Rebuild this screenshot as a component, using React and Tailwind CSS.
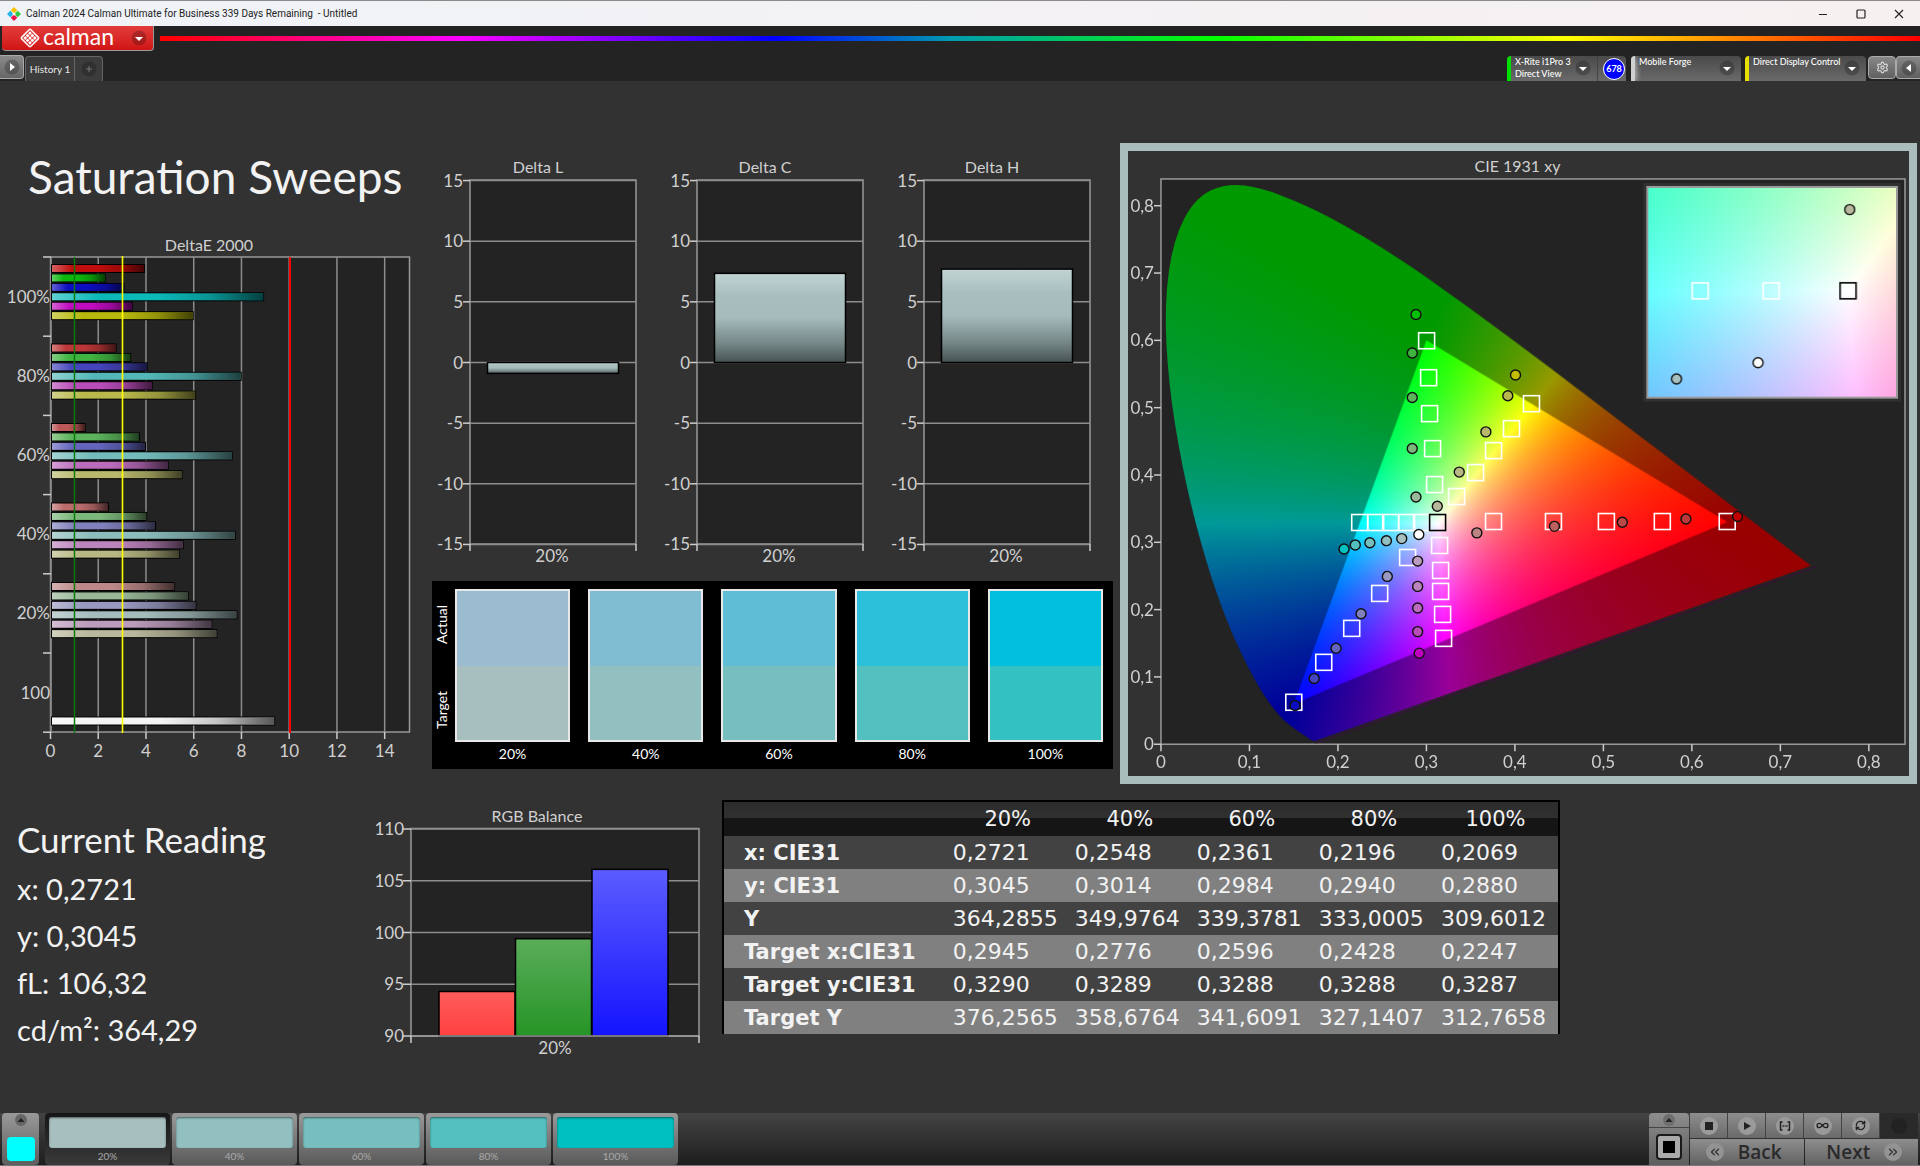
import { useEffect, useRef } from 'react'
import { ChevronsLeft, ChevronsRight, Infinity as InfinityIcon, RefreshCw, Settings } from 'lucide-react'

const levels = ['20%', '40%', '60%', '80%', '100%']

const deltaE = [
  { label: '100%', values: [3.96, 2.31, 3.1, 8.95, 3.44, 6.0], colors: ['#c00c0c', '#0cb80c', '#0c0cc0', '#0cb8b8', '#c00cc0', '#b8b80c'] },
  { label: '80%', values: [2.77, 3.38, 4.07, 8.01, 4.28, 6.1], colors: ['#bc3838', '#40b440', '#4444bc', '#54b8b8', '#b84cb8', '#b8b84c'] },
  { label: '60%', values: [1.47, 3.75, 4.0, 7.63, 4.95, 5.53], colors: ['#bc5858', '#5cb45c', '#6464bc', '#74bcbc', '#bc6cbc', '#b8b86c'] },
  { label: '40%', values: [2.45, 4.05, 4.42, 7.76, 5.58, 5.41], colors: ['#bc6c6c', '#7cb87c', '#8080bc', '#8cbcbc', '#bc84bc', '#b8b884'] },
  { label: '20%', values: [5.2, 5.79, 6.11, 7.83, 6.78, 6.99], colors: ['#bc8888', '#98b898', '#9898c0', '#a4bcbc', '#bc9cbc', '#b8b89c'] },
]

const swatches = [
  { actual: '#9abbd0', target: '#a8bfbf', chip: '#a8bfbf' },
  { actual: '#80bdd3', target: '#92bfbf', chip: '#92bfbf' },
  { actual: '#5fbed6', target: '#77bfbf', chip: '#77bfbf' },
  { actual: '#2cc0da', target: '#54bfbf', chip: '#54bfbf' },
  { actual: '#00c0dd', target: '#33c1c1', chip: '#00c0c0' },
]

const tableRows = [
  ['x: CIE31', '0,2721', '0,2548', '0,2361', '0,2196', '0,2069'],
  ['y: CIE31', '0,3045', '0,3014', '0,2984', '0,2940', '0,2880'],
  ['Y', '364,2855', '349,9764', '339,3781', '333,0005', '309,6012'],
  ['Target x:CIE31', '0,2945', '0,2776', '0,2596', '0,2428', '0,2247'],
  ['Target y:CIE31', '0,3290', '0,3289', '0,3288', '0,3288', '0,3287'],
  ['Target Y', '376,2565', '358,6764', '341,6091', '327,1407', '312,7658'],
]

const locus = [
  [0.1741, 0.005], [0.1714, 0.0051], [0.1689, 0.0069], [0.1644, 0.0109], [0.1566, 0.0177], [0.144, 0.0297],
  [0.1355, 0.0399], [0.1241, 0.0578], [0.1096, 0.0868], [0.0913, 0.1327], [0.0687, 0.2007], [0.0454, 0.295],
  [0.0235, 0.4127], [0.0082, 0.5384], [0.0039, 0.6548], [0.0139, 0.7502], [0.0389, 0.812], [0.0743, 0.8338],
  [0.1142, 0.8262], [0.1547, 0.8059], [0.1929, 0.7816], [0.2296, 0.7543], [0.2658, 0.7243], [0.3016, 0.6923],
  [0.3373, 0.6589], [0.3731, 0.6245], [0.4087, 0.5896], [0.4441, 0.5547], [0.4788, 0.5202], [0.5125, 0.4866],
  [0.5448, 0.4544], [0.5752, 0.4242], [0.627, 0.3725], [0.6658, 0.334], [0.6915, 0.3083], [0.719, 0.2809],
  [0.7347, 0.2653],
]

const gamut = [[0.64, 0.33], [0.3, 0.6], [0.15, 0.06]]

const targets = [
  [0.3, 0.6], [0.3025, 0.5442], [0.304, 0.4905], [0.3074, 0.4388], [0.3093, 0.3851],
  [0.4187, 0.5066], [0.3958, 0.469], [0.3762, 0.4369], [0.3552, 0.4036], [0.3337, 0.3673],
  [0.64, 0.331], [0.5666, 0.331], [0.5034, 0.331], [0.4436, 0.331], [0.3762, 0.331],
  [0.2247, 0.3297], [0.2428, 0.3297], [0.2596, 0.3297], [0.2776, 0.3297], [0.2945, 0.3297],
  [0.15, 0.0625], [0.1836, 0.1217], [0.2156, 0.1723], [0.2476, 0.224], [0.2792, 0.277],
  [0.3198, 0.1568], [0.3179, 0.1932], [0.316, 0.2277], [0.316, 0.2586], [0.3145, 0.2955],
]

const readings = [
  [0.2882, 0.6385, '#00c000'], [0.284, 0.5812, '#40b440'], [0.284, 0.5152, '#5cb45c'], [0.284, 0.4394, '#7cb87c'], [0.2882, 0.3673, '#98b898'],
  [0.4007, 0.5485, '#c0c000'], [0.392, 0.5177, '#b8b84c'], [0.3672, 0.464, '#b8b86c'], [0.3371, 0.4043, '#b8b884'], [0.3123, 0.3536, '#b8b89c'],
  [0.6516, 0.3383, '#c00000'], [0.5933, 0.3346, '#bc3838'], [0.5214, 0.3297, '#bc4848'], [0.4447, 0.3237, '#bc6060'], [0.357, 0.314, '#bc8484'],
  [0.2069, 0.29, '#00c0c0'], [0.2196, 0.296, '#54bfbf'], [0.2361, 0.2994, '#77bfbf'], [0.2548, 0.3024, '#92bfbf'], [0.2721, 0.3055, '#a8bfbf'],
  [0.1516, 0.0576, '#0c0cc0'], [0.1731, 0.0977, '#4444bc'], [0.1979, 0.1427, '#6464bc'], [0.2261, 0.1938, '#8080bc'], [0.2558, 0.2493, '#9898c0'],
  [0.2919, 0.1353, '#c000c0'], [0.2901, 0.1673, '#b84cb8'], [0.2901, 0.2024, '#bc6cbc'], [0.2901, 0.2345, '#bc84bc'], [0.2901, 0.2721, '#bc9cbc'],
  [0.2914, 0.3115, '#ffffff'],
]

// chromaticity -> brightest displayable colour, linear light
function xyToRgb(x, y) {
  const X = x / y
  const Z = (1 - x - y) / y
  const lin = [
    3.2406 * X - 1.5372 - 0.4986 * Z,
    -0.9689 * X + 1.8758 + 0.0415 * Z,
    0.0557 * X - 0.204 + 1.057 * Z,
  ].map((v) => Math.max(0, v))
  const max = Math.max(...lin)
  return lin.map((v) => (255 * v) / max)
}

function makeField(w, h, toXy, gain) {
  const off = document.createElement('canvas')
  off.width = w
  off.height = h
  const ctx = off.getContext('2d')
  const img = ctx.createImageData(w, h)
  for (let j = 0; j < h; j++) {
    for (let i = 0; i < w; i++) {
      const [x, y] = toXy(i, j)
      const rgb = xyToRgb(x, Math.max(y, 0.0005))
      const p = (j * w + i) * 4
      img.data[p] = rgb[0] * gain
      img.data[p + 1] = rgb[1] * gain
      img.data[p + 2] = rgb[2] * gain
      img.data[p + 3] = 255
    }
  }
  ctx.putImageData(img, 0, 0)
  return off
}

const PLOT_W = 745
const PLOT_H = 566
const px = (x) => 886 * x
const py = (y) => PLOT_H - 674 * y

function GamutField() {
  const ref = useRef(null)

  useEffect(() => {
    const ctx = ref.current.getContext('2d')
    const toXy = (i, j) => [i / 886, (PLOT_H - j) / 674]
    ctx.clearRect(0, 0, PLOT_W, PLOT_H)

    ctx.save()
    ctx.beginPath()
    ctx.moveTo(px(locus[0][0]), py(locus[0][1]))
    for (let i = 1; i < locus.length - 1; i++) {
      const [ax, ay] = locus[i]
      const [bx, by] = locus[i + 1]
      ctx.quadraticCurveTo(px(ax), py(ay), px((ax + bx) / 2), py((ay + by) / 2))
    }
    ctx.lineTo(px(0.7347), py(0.2653))
    ctx.closePath()
    ctx.clip()
    ctx.drawImage(makeField(PLOT_W, PLOT_H, toXy, 0.6), 0, 0)
    ctx.restore()

    ctx.save()
    ctx.beginPath()
    gamut.forEach(([x, y]) => ctx.lineTo(px(x), py(y)))
    ctx.closePath()
    ctx.clip()
    ctx.drawImage(makeField(PLOT_W, PLOT_H, toXy, 1), 0, 0)
    ctx.restore()
  }, [])

  return <canvas ref={ref} width={PLOT_W} height={PLOT_H} className="block h-full w-full" />
}

const insetX = (x) => 200 + (x - 0.3127) * 4230
const insetY = (y) => 103 - (y - 0.329) * 3600

function InsetField() {
  const ref = useRef(null)

  useEffect(() => {
    const toXy = (i, j) => [0.3127 + (i - 200) / 4230, 0.329 + (103 - j) / 3600]
    ref.current.getContext('2d').drawImage(makeField(248, 209, toXy, 1), 0, 0)
  }, [])

  return <canvas ref={ref} width={248} height={209} className="block h-full w-full" />
}

function Marker({ x, y, black }) {
  return (
    <rect x={Math.round(x) - 8} y={Math.round(y) - 8} width="16" height="16" fill="none" stroke={black ? '#000' : '#fff'} strokeWidth="1.6" />
  )
}

function Dot({ x, y, fill }) {
  return <circle cx={x} cy={y} r="5" fill={fill} stroke="#111" strokeWidth="1.4" />
}

function CieChart() {
  const ticks = [0, 1, 2, 3, 4, 5, 6, 7, 8]
  const tickLabel = (t) => (t === 0 ? '0' : `0,${t}`)

  return (
    <svg viewBox="0 0 782 626" className="block h-auto w-full font-[Lato,sans-serif]" role="img" aria-label="CIE 1931 xy">
      <text x="390" y="21" textAnchor="middle" fontSize="16" fill="#d0d0d0">CIE 1931 xy</text>
      <rect x="33" y="28" width="745" height="566" fill="#232323" stroke="#999" strokeWidth="1.5" />
      <foreignObject x="33" y="28" width={PLOT_W} height={PLOT_H}>
        <GamutField />
      </foreignObject>
      <path d="M188 593 L690 416" stroke="#3c0f3c" strokeWidth="1" fill="none" />
      {ticks.map((t) => (
        <g key={t} fill="#d0d0d0" fontSize="17">
          <path d={`M${33 + 88.6 * t} 594v7`} stroke="#ccc" strokeWidth="1.5" />
          <text x={33 + 88.6 * t} y="618" textAnchor="middle">{tickLabel(t)}</text>
          <path d={`M33 ${594 - 67.4 * t}h-7`} stroke="#ccc" strokeWidth="1.5" />
          <text x="26" y={600 - 67.4 * t} textAnchor="end">{tickLabel(t)}</text>
        </g>
      ))}
      <g transform="translate(33 28)">
        {targets.map(([x, y]) => <Marker key={`${x}-${y}`} x={px(x)} y={py(y)} />)}
        <Marker x={px(0.3127)} y={py(0.33)} black />
        {readings.map(([x, y, fill]) => <Dot key={`${x}-${y}`} x={px(x)} y={py(y)} fill={fill} />)}
      </g>
      <rect x="516" y="32" width="258" height="219" fill="#303030" />
      <rect x="519" y="35" width="252" height="213" fill="#999" />
      <foreignObject x="521" y="37" width="248" height="209">
        <InsetField />
      </foreignObject>
      <g transform="translate(521 37)">
        <Marker x={insetX(0.2776)} y={insetY(0.329)} />
        <Marker x={insetX(0.2945)} y={insetY(0.329)} />
        <Marker x={insetX(0.3127)} y={insetY(0.329)} black />
        <Dot x={insetX(0.3131)} y={insetY(0.3516)} fill="#b8b89c" />
        <Dot x={insetX(0.2914)} y={insetY(0.309)} fill="#fff" />
        <Dot x={insetX(0.2721)} y={insetY(0.3045)} fill="#a8bfbf" />
      </g>
    </svg>
  )
}

function DeltaEChart() {
  const x = (v) => 50.5 + v * 23.87
  const bars = deltaE.flatMap((group, g) =>
    group.values.map((value, i) => ({ value, color: group.colors[i], y: 35 + g * 79.5 + i * 9.43 })),
  )
  bars.push({ value: 9.41, color: '#f4f4f4', y: 487.5 })

  return (
    <svg viewBox="0 0 430 540" className="block h-auto w-full font-[Lato,sans-serif]" role="img" aria-label="DeltaE 2000">
      <defs>
        <linearGradient id="shine">
          <stop offset="0" stopColor="#fff" stopOpacity="0.35" />
          <stop offset="0.22" stopColor="#fff" stopOpacity="0" />
          <stop offset="0.5" stopColor="#000" stopOpacity="0" />
          <stop offset="0.75" stopColor="#000" stopOpacity="0.2" />
          <stop offset="1" stopColor="#000" stopOpacity="0.65" />
        </linearGradient>
      </defs>
      <text x="209" y="22" textAnchor="middle" fontSize="16" fill="#d0d0d0">DeltaE 2000</text>
      <rect x="51" y="28" width="358.5" height="475" fill="#232323" stroke="#999" strokeWidth="1.5" />
      {[0, 2, 4, 6, 8, 10, 12, 14].map((t) => (
        <g key={t}>
          <path d={`M${x(t)} 28V503`} stroke="#8c8c8c" strokeWidth="1.5" />
          <path d={`M${x(t)} 503v7`} stroke="#ccc" strokeWidth="1.5" />
          <text x={x(t)} y="528" textAnchor="middle" fontSize="17" fill="#d0d0d0">{t}</text>
        </g>
      ))}
      {[0, 1, 2, 3, 4, 5, 6].map((t) => (
        <path key={t} d={`M43 ${28 + t * 79.2}h8`} stroke="#ccc" strokeWidth="1.5" />
      ))}
      {deltaE.map((group, g) => (
        <text key={group.label} x="50" y={74 + g * 79} textAnchor="end" fontSize="17" fill="#d0d0d0">{group.label}</text>
      ))}
      <text x="50" y="470" textAnchor="end" fontSize="17" fill="#d0d0d0">100</text>
      {bars.map((bar) => (
        <g key={bar.y}>
          <rect x="51" y={bar.y} width={x(bar.value) - 51} height="9" fill="#000" />
          <rect x="52" y={bar.y + 1} width={x(bar.value) - 53} height="7" fill={bar.color} />
          <rect x="52" y={bar.y + 1} width={x(bar.value) - 53} height="7" fill="url(#shine)" />
        </g>
      ))}
      <path d="M74.5 28V504" stroke="#0a7a0a" strokeWidth="1.5" />
      <path d="M122.5 27V504" stroke="#ffff00" strokeWidth="1.6" />
      <path d="M290 28V504" stroke="#ff0000" strokeWidth="2" />
    </svg>
  )
}

function DeltaChart({ title, value }) {
  const y = (v) => 222.5 - v * 12.13
  const top = Math.min(y(0), y(value))

  return (
    <svg viewBox="0 0 227 432" className="block h-auto w-full font-[Lato,sans-serif]" role="img" aria-label={title}>
      <defs>
        <linearGradient id="glass" x1="0" y1="0" x2="0" y2="1">
          <stop offset="0" stopColor="#c2d4d3" />
          <stop offset="0.25" stopColor="#a8bfc0" />
          <stop offset="0.5" stopColor="#a5bbbc" />
          <stop offset="0.8" stopColor="#738484" />
          <stop offset="1" stopColor="#465252" />
        </linearGradient>
      </defs>
      <text x="106" y="33" textAnchor="middle" fontSize="16" fill="#d0d0d0">{title}</text>
      <rect x="38" y="40" width="166" height="364" fill="#232323" stroke="#999" strokeWidth="1.5" />
      {[15, 10, 5, 0, -5, -10, -15].map((t) => (
        <g key={t}>
          <path d={`M38 ${y(t)}H204`} stroke="#8c8c8c" strokeWidth="1.5" />
          <path d={`M31 ${y(t)}h7`} stroke="#ccc" strokeWidth="1.5" />
          <text x="31" y={y(t) + 6} textAnchor="end" fontSize="17" fill="#d0d0d0">{t}</text>
        </g>
      ))}
      <path d="M38 404v7M204 404v7" stroke="#ccc" strokeWidth="1.5" />
      <rect x="55.5" y={top} width="131" height={Math.abs(y(value) - y(0))} fill="url(#glass)" stroke="#000" strokeWidth="1.5" />
      <text x="120" y="422" textAnchor="middle" fontSize="17" fill="#d0d0d0">20%</text>
    </svg>
  )
}

function RgbBalance() {
  const y = (v) => 247 - (v - 90) * 10.35
  const bars = [
    { id: 'r', x: 79, v: 94.3, from: '#ff5c5c', to: '#ff4040' },
    { id: 'g', x: 155.5, v: 99.4, from: '#5aad5a', to: '#269426' },
    { id: 'b', x: 232, v: 106.1, from: '#5c5cff', to: '#1414ff' },
  ]

  return (
    <svg viewBox="0 0 361 280" className="block h-auto w-full font-[Lato,sans-serif]" role="img" aria-label="RGB Balance">
      <text x="177" y="33" textAnchor="middle" fontSize="16" fill="#d0d0d0">RGB Balance</text>
      <rect x="51" y="39.5" width="288" height="207.5" fill="#232323" stroke="#999" strokeWidth="1.5" />
      {[110, 105, 100, 95, 90].map((t) => (
        <g key={t}>
          <path d={`M51 ${y(t)}H339`} stroke="#8c8c8c" strokeWidth="1.5" />
          <path d={`M43 ${y(t)}h8`} stroke="#ccc" strokeWidth="1.5" />
          <text x="44" y={y(t) + 6} textAnchor="end" fontSize="17" fill="#d0d0d0">{t}</text>
        </g>
      ))}
      {bars.map((bar) => (
        <g key={bar.id}>
          <linearGradient id={`bar-${bar.id}`} x1="0" y1="0" x2="0" y2="1">
            <stop offset="0" stopColor={bar.from} />
            <stop offset="1" stopColor={bar.to} />
          </linearGradient>
          <rect x={bar.x} y={y(bar.v)} width="76" height={247 - y(bar.v)} fill={`url(#bar-${bar.id})`} stroke="#000" strokeWidth="1.5" />
        </g>
      ))}
      <path d="M51 247H339" stroke="#999" strokeWidth="1.5" />
      <path d="M51 247v7M339 247v7" stroke="#ccc" strokeWidth="1.5" />
      <text x="195" y="265" textAnchor="middle" fontSize="17" fill="#d0d0d0">20%</text>
    </svg>
  )
}

function LogoMark() {
  const cells = [0, 1, 2]
  return (
    <svg viewBox="0 0 20 20" className="h-5 w-5" aria-hidden="true">
      <g transform="rotate(45 10 10)">
        <rect x="3.6" y="3.6" width="12.8" height="12.8" rx="1.2" fill="none" stroke="#fff" strokeWidth="1.5" />
        {cells.map((r) => cells.map((c) => (
          <rect key={`${r}${c}`} x={5.2 + c * 3.4} y={5.2 + r * 3.4} width="2.8" height="2.8" rx="0.8" fill="#fff" />
        )))}
      </g>
    </svg>
  )
}

function AppIcon() {
  return (
    <svg viewBox="0 0 14 14" className="h-3.5 w-3.5" aria-hidden="true">
      <path d="M7 0l3.3 3.3L7 6.6 3.7 3.3z" fill="#fbc400" />
      <path d="M3.3 3.7L6.6 7l-3.3 3.3L0 7z" fill="#20b4e8" />
      <path d="M10.7 3.7L14 7l-3.3 3.3L7.4 7z" fill="#2ecc40" />
      <path d="M7 7.4l3.3 3.3L7 14l-3.3-3.3z" fill="#e8174b" />
      <path d="M7 5.2L8.8 7 7 8.8 5.2 7z" fill="#fff" />
    </svg>
  )
}

function Knob({ points }) {
  return (
    <svg viewBox="0 0 16 16" className="h-4 w-4 shrink-0" aria-hidden="true">
      <circle cx="8" cy="8" r="7.5" fill="#000" fillOpacity="0.22" />
      <polygon points={points} fill="#fff" />
    </svg>
  )
}

function DeviceTab({ strip, lines, className, children }) {
  return (
    <div className={['flex h-[25px] overflow-hidden rounded-t bg-linear-to-b from-[#4a4a4a] to-[#6a6a6a]', className].join(' ')}>
      <span className={['w-1 shrink-0', strip].join(' ')} />
      <button type="button" className="flex flex-1 items-start justify-between pl-1 pr-1.5 text-left">
        <span className="text-[9px] leading-3 font-medium whitespace-nowrap text-white">
          {lines.map((line) => <span key={line} className="block">{line}</span>)}
        </span>
        <span className="pt-1"><Knob points="4,7 12,7 8,11" /></span>
      </button>
      {children}
    </div>
  )
}

function Header() {
  return (
    <header className="bg-[#232323]">
      <div className="flex h-[26px] items-center justify-between border-t border-[#8a8a8a] bg-linear-to-r from-[#eff3f8] to-[#f7f0f1] pl-[7px]">
        <div className="flex items-center gap-[5px] font-[Roboto,sans-serif] text-[10px] whitespace-pre text-[#222]">
          <AppIcon />
          <span>{'Calman 2024 Calman Ultimate for Business 339 Days Remaining  - Untitled'}</span>
        </div>
        <div className="flex pr-0.5 text-[#222]">
          <button type="button" aria-label="Minimize" className="flex w-[38px] justify-center">
            <svg viewBox="0 0 10 10" className="h-2.5 w-2.5"><path d="M1 5.5h8" stroke="currentColor" /></svg>
          </button>
          <button type="button" aria-label="Maximize" className="flex w-[38px] justify-center">
            <svg viewBox="0 0 10 10" className="h-2.5 w-2.5"><rect x="1" y="1" width="8" height="8" rx="1" fill="none" stroke="currentColor" strokeWidth="1.2" /></svg>
          </button>
          <button type="button" aria-label="Close" className="flex w-[38px] justify-center">
            <svg viewBox="0 0 10 10" className="h-2.5 w-2.5"><path d="M1 1l8 8M9 1l-8 8" stroke="currentColor" strokeWidth="1.1" /></svg>
          </button>
        </div>
      </div>

      <div className="flex h-[25px] gap-1.5">
        <button
          type="button"
          className="ml-0.5 flex w-[152px] shrink-0 items-center rounded-b border-r border-b border-[#999] bg-linear-to-b from-[#e23b3b] to-[#d01212] pl-[18px] pr-1.5"
        >
          <LogoMark />
          <span className="ml-[3px] pb-1 font-[Lato,sans-serif] text-[23px] leading-5 text-white">calman</span>
          <span className="ml-auto"><Knob points="4,7 12,7 8,11" /></span>
        </button>
        <div className="mt-2.5 h-[5px] flex-1 bg-[linear-gradient(to_right,#ff0000,#ff00ff_17%,#0000ff_35%,#009cb0_45%,#00ff00_60%,#ffff00_80%,#ff0000)]" />
      </div>

      <div className="flex h-[30px] items-end justify-between font-[Lato,sans-serif]">
        <div className="flex items-end">
          <button type="button" aria-label="Show panel" className="mb-0.5 flex h-6 w-6 items-center justify-center rounded-r border border-l-0 border-[#aaa] bg-linear-to-b from-[#8a8a8a] to-[#666]">
            <Knob points="6,4 11,8 6,12" />
          </button>
          <div className="ml-px flex h-[25px] rounded-t border border-b-0 border-[#666] bg-[#3c3c3c]">
            <button type="button" className="w-12 text-[10px] text-[#e8e8e8]">History 1</button>
            <button type="button" aria-label="Add tab" className="flex w-7 items-center justify-center border-l border-[#666]">
              <svg viewBox="0 0 16 16" className="h-4 w-4">
                <circle cx="8" cy="8" r="7.5" fill="#303030" />
                <path d="M8 5v6M5 8h6" stroke="#777" />
              </svg>
            </button>
          </div>
        </div>

        <div className="flex items-end">
          <DeviceTab strip="bg-[#00e000]" lines={['X-Rite i1Pro 3', 'Direct View']} className="w-[119px]">
            <div className="flex w-[29px] items-center justify-end border-l border-[#444] pr-px">
              <span className="flex h-[22px] w-[22px] items-center justify-center rounded-full border border-white bg-[#0000ff] text-[9px] font-bold text-white">678</span>
            </div>
          </DeviceTab>
          <DeviceTab strip="bg-[#d0d0d0] shadow-[0_0_6px_#fff]" lines={['Mobile Forge']} className="ml-[5px] w-[110px]" />
          <DeviceTab strip="bg-[#e8e000]" lines={['Direct Display Control']} className="ml-1 w-[121px]" />
          <button type="button" aria-label="Settings" className="mb-0.5 ml-0.5 flex h-[23px] w-7 items-center justify-center rounded border border-[#aaa] bg-linear-to-b from-[#888] to-[#606060]">
            <Settings size={13} color="#ddd" />
          </button>
          <button type="button" aria-label="Hide panel" className="mb-0.5 flex h-[23px] w-6 items-center justify-center rounded-l border border-r-0 border-[#aaa] bg-linear-to-b from-[#888] to-[#606060]">
            <Knob points="10,4 5,8 10,12" />
          </button>
        </div>
      </div>
    </header>
  )
}

function SwatchPanel() {
  return (
    <div className="flex bg-black pr-[10px] pb-1.5 font-[Lato,sans-serif] text-[14px] text-white">
      <div className="flex w-[23px] shrink-0 flex-col items-center pr-1 pb-2.5">
        <span className="flex flex-1 rotate-180 items-center justify-center [writing-mode:vertical-rl]">Actual</span>
        <span className="flex flex-1 rotate-180 items-center justify-center [writing-mode:vertical-rl]">Target</span>
      </div>
      <div className="grid flex-1 grid-cols-5 gap-[18px] pt-2">
        {swatches.map((s, i) => (
          <div key={levels[i]}>
            <div className="flex h-[153px] flex-col border-2 border-[#e8e8e8]">
              <div className="flex-1" style={{ backgroundColor: s.actual }} />
              <div className="flex-1" style={{ backgroundColor: s.target }} />
            </div>
            <p className="pt-[3px] text-center leading-[18px]">{levels[i]}</p>
          </div>
        ))}
      </div>
    </div>
  )
}

function ResultsTable() {
  return (
    <table className="w-full table-fixed border-2 border-b-0 border-black font-['DejaVu_Sans',sans-serif] text-[22px] text-[#f2f2f2]">
      <thead>
        <tr className="h-[35px] bg-[linear-gradient(to_bottom,#2c2c2c,#303030_50%,#151515_50%,#151515)] text-[21px]">
          <th className="w-[27%]" aria-label="Value" />
          {levels.map((l) => <th key={l} scope="col" className="p-0 pr-1 leading-8 font-normal">{l}</th>)}
        </tr>
      </thead>
      <tbody>
        {tableRows.map(([name, ...cells]) => (
          <tr key={name} className="h-[33px] odd:bg-[#424242] even:bg-[#808080]">
            <th scope="row" className="p-0 pl-5 text-left text-[21px] leading-8 font-bold whitespace-nowrap">{name}</th>
            {cells.map((c) => <td key={c} className="p-0 pl-1 leading-8">{c}</td>)}
          </tr>
        ))}
      </tbody>
    </table>
  )
}

function TransportButton({ label, children }) {
  return (
    <button type="button" aria-label={label} className="flex items-center justify-center border-r border-[#444] bg-linear-to-b from-[#8e8e8e] to-[#6a6a6a] text-[#222]">
      <span className="flex h-[18px] w-[18px] items-center justify-center rounded-full bg-[#9a9a9a]">{children}</span>
    </button>
  )
}

function Footer() {
  return (
    <footer className="flex h-[53px] justify-between border-b border-[#777] bg-linear-to-b from-[#444] to-[#1e1e1e] pl-0.5 font-[Lato,sans-serif]">
      <div className="flex gap-0.5">
        <button type="button" aria-label="Current color" className="mr-1 flex w-[37px] flex-col items-center justify-between rounded bg-linear-to-b from-[#999] to-[#5e5e5e] pb-1">
          <svg viewBox="0 0 12 12" className="mt-px h-3 w-3">
            <circle cx="6" cy="6" r="6" fill="#666" />
            <polygon points="2.5,8 9.5,8 6,4" fill="#222" />
          </svg>
          <span className="h-6 w-7 rounded-sm bg-[#00ffff]" />
        </button>
        {levels.map((l, i) => (
          <button
            key={l}
            type="button"
            className={[
              'flex w-[125px] flex-col items-stretch rounded px-1 pt-1 text-[10px] leading-4',
              i === 0 ? 'bg-linear-to-b from-[#161616] to-[#3a3a3a] text-[#aaa]' : 'bg-linear-to-b from-[#9a9a9a] to-[#5a5a5a] text-[#aaa]',
            ].join(' ')}
          >
            <span className="h-[31px] rounded-[3px] shadow-[inset_0_1px_2px_rgba(0,0,0,0.5)]" style={{ backgroundColor: swatches[i].chip }} />
            <span>{l}</span>
          </button>
        ))}
      </div>

      <div className="flex gap-px pr-0.5 font-['Open_Sans',sans-serif]">
        <div className="flex w-10 flex-col overflow-hidden rounded-t bg-linear-to-b from-[#8e8e8e] to-[#5e5e5e]">
          <button type="button" aria-label="Expand" className="flex h-[15px] items-center justify-center border-b border-[#444]">
            <svg viewBox="0 0 12 12" className="h-3 w-3">
              <circle cx="6" cy="6" r="6" fill="#6e6e6e" />
              <polygon points="2.5,8 9.5,8 6,4" fill="#222" />
            </svg>
          </button>
          <button type="button" aria-label="Pattern window" className="flex flex-1 items-center justify-center">
            <span className="flex h-[26px] w-[26px] items-center justify-center rounded border-2 border-[#1a1a1a] bg-[#aaa]">
              <span className="h-3 w-3 bg-black" />
            </span>
          </button>
        </div>
        <div className="flex w-[228px] flex-col gap-px">
          <div className="grid h-[25px] grid-cols-6">
            <TransportButton label="Stop"><span className="h-2 w-2 bg-[#222]" /></TransportButton>
            <TransportButton label="Play">
              <svg viewBox="0 0 10 10" className="h-2.5 w-2.5"><polygon points="2,1 9,5 2,9" fill="currentColor" /></svg>
            </TransportButton>
            <TransportButton label="Read series">
              <svg viewBox="0 0 12 10" className="h-2.5 w-3">
                <path d="M3.500 1H1.500v8h2M8.500 1h2v8h-2" fill="none" stroke="currentColor" strokeWidth="1.5" />
                <path d="M3.500 5h1.400M5.500 5h1M7.200 5h1.400" stroke="currentColor" strokeWidth="1.5" />
              </svg>
            </TransportButton>
            <TransportButton label="Continuous"><InfinityIcon size={13} strokeWidth={2.5} /></TransportButton>
            <TransportButton label="Refresh"><RefreshCw size={11} strokeWidth={3} /></TransportButton>
            <div className="flex items-center justify-center bg-[#2a2a2a]">
              <span className="h-4 w-4 rounded-full bg-[#222]" />
            </div>
          </div>
          <div className="grid flex-1 grid-cols-2 gap-px text-[19px] leading-5 font-semibold text-[#2a2a2a]">
            <button type="button" className="flex items-center justify-center gap-3.5 bg-linear-to-b from-[#8e8e8e] to-[#626262] pr-1.5">
              <span className="flex h-[18px] w-[18px] items-center justify-center rounded-full bg-[#939393]"><ChevronsLeft size={14} /></span>
              Back
            </button>
            <button type="button" className="flex items-center justify-center gap-3.5 bg-linear-to-b from-[#8e8e8e] to-[#626262] pl-1.5">
              Next
              <span className="flex h-[18px] w-[18px] items-center justify-center rounded-full bg-[#939393]"><ChevronsRight size={14} /></span>
            </button>
          </div>
        </div>
      </div>
    </footer>
  )
}

export default function App() {
  return (
    <div className="flex min-h-screen flex-col bg-[#323232]">
      <Header />

      <main className="flex-1">
        <section className="grid grid-cols-[430fr_685fr_805fr]">
          <div className="pt-[61px]">
            <h1 className="pl-7 font-[Lato,sans-serif] text-[46px] leading-[70px] text-[#f2f2f2]">Saturation Sweeps</h1>
            <div className="pt-[17px]"><DeltaEChart /></div>
          </div>

          <div className="px-0.5 pt-[59px]">
            <div className="grid grid-cols-3">
              <DeltaChart title="Delta L" value={-0.9} />
              <DeltaChart title="Delta C" value={7.35} />
              <DeltaChart title="Delta H" value={7.7} />
            </div>
            <div className="pt-[9px]"><SwatchPanel /></div>
          </div>

          <div className="pt-[62px] pr-[3px] pl-[5px]">
            <div className="border-8 border-[#a9bdbd]"><CieChart /></div>
          </div>
        </section>

        <section className="grid grid-cols-[360fr_361fr_839fr_360fr] pt-[5px]">
          <div className="pt-6 pl-[17px] font-[Lato,sans-serif] text-[#f2f2f2]">
            <h2 className="text-[35px] leading-[52px]">Current Reading</h2>
            <div className="text-[29px] leading-[47px]">
              <p>x: 0,2721</p>
              <p>y: 0,3045</p>
              <p>fL: 106,32</p>
              <p>cd/m²: 364,29</p>
            </div>
          </div>
          <RgbBalance />
          <div className="pt-[11px] pl-px"><ResultsTable /></div>
        </section>
      </main>

      <Footer />
    </div>
  )
}
